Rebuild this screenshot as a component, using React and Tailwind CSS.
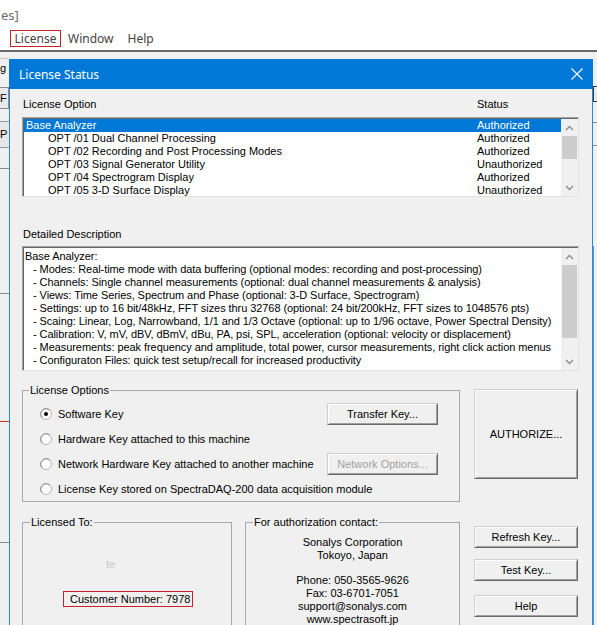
import React from 'react';

const listItems = [
  { name: 'Base Analyzer', status: 'Authorized', indent: false, selected: true },
  { name: 'OPT /01 Dual Channel Processing', status: 'Authorized', indent: true },
  { name: 'OPT /02 Recording and Post Processing Modes', status: 'Authorized', indent: true },
  { name: 'OPT /03 Signal Generator Utility', status: 'Unauthorized', indent: true },
  { name: 'OPT /04 Spectrogram Display', status: 'Authorized', indent: true },
  { name: 'OPT /05 3-D Surface Display', status: 'Unauthorized', indent: true },
];

const descLines = [
  '- Modes: Real-time mode with data buffering (optional modes: recording and post-processing)',
  '- Channels: Single channel measurements (optional: dual channel measurements & analysis)',
  '- Views: Time Series, Spectrum and Phase (optional: 3-D Surface, Spectrogram)',
  '- Settings: up to 16 bit/48kHz, FFT sizes thru 32768 (optional: 24 bit/200kHz, FFT sizes to 1048576 pts)',
  '- Scaing: Linear, Log, Narrowband, 1/1 and 1/3 Octave (optional: up to 1/96 octave, Power Spectral Density)',
  '- Calibration: V, mV, dBV, dBmV, dBu, PA, psi, SPL, acceleration (optional: velocity or displacement)',
  '- Measurements: peak frequency and amplitude, total power, cursor measurements, right click action menus',
  '- Configuraton Files: quick test setup/recall for increased productivity',
];

const radios = [
  { label: 'Software Key', checked: true, button: 'Transfer Key...' },
  { label: 'Hardware Key attached to this machine' },
  { label: 'Network Hardware Key attached to another machine', button: 'Network Options...', disabled: true },
  { label: 'License Key stored on SpectraDAQ-200 data acquisition module' },
];

const Chevron = ({ down }) => (
  <svg width="9" height="6" viewBox="0 0 9 6">
    <polyline
      points={down ? '1,1 4.5,4.5 8,1' : '1,5 4.5,1.5 8,5'}
      fill="none"
      stroke="#8a8a8a"
      strokeWidth="1.3"
    />
  </svg>
);

// classic raised 3D button
const Button = ({ children, className = '', disabled }) => (
  <div
    className={`flex items-center justify-center bg-[#f0f0f0] border border-t-[#cfcfcf] border-l-[#cfcfcf] border-r-[#696969] border-b-[#696969] shadow-[inset_1px_1px_0_#ffffff,inset_-1px_-1px_0_#a0a0a0] ${disabled ? 'text-[#a0a0a0]' : 'text-black'} ${className}`}
  >
    {children}
  </div>
);

const Radio = ({ checked }) => (
  <svg width="12" height="12" viewBox="0 0 12 12" className="shrink-0">
    <circle cx="6" cy="6" r="5.5" fill="#ffffff" stroke="#b4b4b4" strokeWidth="1" />
    <path d="M2.2 9.8 A5.4 5.4 0 0 1 9.8 2.2" fill="none" stroke="#8c8c8c" strokeWidth="1" />
    {checked && <circle cx="6" cy="6" r="2" fill="#000000" />}
  </svg>
);

const ListScrollbar = () => (
  <div className="w-[17px] flex flex-col bg-[#f0f0f0]">
    <div className="h-[17px] flex items-center justify-center"><Chevron /></div>
    <div className="h-[23px] mx-[1px] bg-[#cdcdcd]" />
    <div className="flex-1" />
    <div className="h-[17px] flex items-center justify-center"><Chevron down /></div>
  </div>
);

const DescScrollbar = () => (
  <div className="w-[17px] flex flex-col bg-[#f0f0f0]">
    <div className="h-[17px] flex items-center justify-center"><Chevron /></div>
    <div className="h-[73px] mx-[1px] bg-[#cdcdcd]" />
    <div className="flex-1" />
    <div className="h-[17px] flex items-center justify-center"><Chevron down /></div>
  </div>
);

const App = () => {
  return (
    <div className="w-[597px] h-[625px] overflow-hidden bg-white flex flex-col font-['Liberation_Sans',Arial,sans-serif]">
      {/* app header behind the dialog */}
      <div className="h-[50px] shrink-0 font-['Noto_Sans',sans-serif] text-[12px] text-[#444444]">
        <div className="h-[28px] leading-[30px] pl-[1px] text-[#6b6b6b] text-[13px]">es]</div>
        <div className="flex items-center h-[20px]">
          <div className="ml-[10px] w-[51px] h-[17px] mt-[1px] border border-[#c8202c] flex items-center justify-center">License</div>
          <div className="ml-[7px] mt-[2px]">Window</div>
          <div className="ml-[14px] mt-[2px]">Help</div>
        </div>
      </div>
      <div className="h-[2px] shrink-0 bg-[#696969]" />

      <div className="flex-1 flex bg-[#f0f0f0] min-h-0">
        {/* left strip of the main window */}
        <div className="w-[9px] shrink-0 flex flex-col text-[11px]">
          <div className="h-[7px] border-b border-[#c8c8c8]" />
          <div className="h-[18px] leading-[18px] text-black overflow-hidden">g</div>
          <div className="mt-[10px] h-[22px] border border-l-0 border-[#8a8a8a] bg-[#e8e8e8] text-[11px] leading-[20px] overflow-hidden">F</div>
          <div className="mt-[12px] h-[27px] border-y border-[#9a9a9a] bg-[#e6e6e6] leading-[25px] overflow-hidden">P</div>
          <div className="mt-[20px] h-[1px] bg-[#8a8a8a]" />
          <div className="mt-[124px] h-[1px] bg-[#8a8a8a]" />
          <div className="mt-[127px] h-[1px] bg-[#d03030]" />
          <div className="mt-[120px] h-[1px] bg-[#8a8a8a]" />
        </div>

        {/* dialog */}
        <div className="w-[584px] shrink-0 mt-[7px] flex flex-col border-x border-[#2b87d8] bg-[#f0f0f0] text-[11px] leading-[13px] text-black">
          <div className="h-[30px] shrink-0 bg-[#0078d7] -mx-[1px] flex items-center justify-between pl-[10px] pr-[10px]">
            <span className="font-['Noto_Sans',sans-serif] text-[12px] text-white mt-[1px]">License Status</span>
            <svg width="12" height="12" viewBox="0 0 12 12">
              <path d="M0.5 0.5 L11.5 11.5 M11.5 0.5 L0.5 11.5" stroke="#ffffff" strokeWidth="1.1" />
            </svg>
          </div>

          <div className="pl-[12px] pr-[13px] flex flex-col">
            <div className="mt-[9px] h-[13px] flex">
              <div className="pl-[1px] w-[455px]">License Option</div>
              <div>Status</div>
            </div>

            {/* license list */}
            <div className="mt-[6px] h-[80px] flex border border-t-[#a0a0a0] border-l-[#a0a0a0] border-r-[#e3e3e3] border-b-[#e3e3e3] shadow-[inset_1px_1px_0_#696969] bg-white">
              <div className="flex-1 pt-[1px] pl-[1px] flex flex-col">
                {listItems.map((item) => (
                  <div
                    key={item.name}
                    className={`h-[13px] flex ${item.selected ? 'bg-[#0078d7] text-white' : ''}`}
                  >
                    <div className={`w-[453px] ${item.indent ? 'pl-[24px]' : 'pl-[2px]'}`}>{item.name}</div>
                    <div>{item.status}</div>
                  </div>
                ))}
              </div>
              <div className="pt-[1px] flex">
                <ListScrollbar />
              </div>
            </div>

            <div className="mt-[31px] h-[13px] pl-[1px]">Detailed Description</div>

            {/* description */}
            <div className="mt-[5px] h-[125px] flex border border-t-[#a0a0a0] border-l-[#a0a0a0] border-r-[#e3e3e3] border-b-[#e3e3e3] shadow-[inset_1px_1px_0_#696969] bg-white">
              <div className="flex-1 pt-[3px] pl-[2px] whitespace-nowrap overflow-hidden tracking-[-0.07px]">
                <div className="h-[13px]">Base Analyzer:</div>
                {descLines.map((line) => (
                  <div key={line} className="h-[13px] pl-[8px]">{line}</div>
                ))}
              </div>
              <div className="pt-[1px] flex">
                <DescScrollbar />
              </div>
            </div>

            {/* license options row */}
            <div className="mt-[13px] flex">
              <fieldset className="w-[438px] h-[118px] border border-[#a8a8a8] rounded-none">
                <legend className="ml-[6px] px-[1px] h-[13px] leading-[13px]">License Options</legend>
                <div className="pl-[17px] pr-[21px] pt-[6px] flex flex-col gap-[3px]">
                  {radios.map((r) => (
                    <div key={r.label} className="h-[22px] flex items-center">
                      <Radio checked={r.checked} />
                      <span className="ml-[6px] flex-1">{r.label}</span>
                      {r.button && (
                        <Button className="w-[111px] h-[22px]" disabled={r.disabled}>{r.button}</Button>
                      )}
                    </div>
                  ))}
                </div>
              </fieldset>
              <Button className="ml-[14px] mt-[5px] w-[104px] h-[90px]">AUTHORIZE...</Button>
            </div>

            {/* bottom row */}
            <div className="mt-[14px] flex">
              <fieldset className="w-[210px] h-[140px] border border-[#a8a8a8]">
                <legend className="ml-[7px] px-[1px] h-[13px] leading-[13px]">Licensed To:</legend>
                <div className="flex flex-col items-start">
                  <div className="mt-[29px] ml-[83px] h-[13px] text-[#c8c8c8]">te</div>
                  <div className="mt-[20px] ml-[40px] w-[130px] h-[16px] border border-[#c8202c] flex items-center pl-[6px]">
                    Customer Number: 7978
                  </div>
                </div>
              </fieldset>

              <fieldset className="ml-[13px] w-[215px] h-[140px] border border-[#a8a8a8]">
                <legend className="ml-[7px] px-[1px] h-[13px] leading-[13px]">For authorization contact:</legend>
                <div className="pt-[7px] text-center leading-[12.8px]">
                  <div>Sonalys Corporation</div>
                  <div>Tokoyo, Japan</div>
                  <div className="h-[12.8px]" />
                  <div>Phone: 050-3565-9626</div>
                  <div>Fax: 03-6701-7051</div>
                  <div>support@sonalys.com</div>
                  <div>www.spectrasoft.jp</div>
                </div>
              </fieldset>

              <div className="ml-[14px] w-[104px] flex flex-col">
                <Button className="mt-[10px] h-[22px]">Refresh Key...</Button>
                <Button className="mt-[11px] h-[22px]">Test Key...</Button>
                <Button className="mt-[14px] h-[22px]">Help</Button>
              </div>
            </div>
          </div>
        </div>

        {/* right strip of the main window */}
        <div className="flex-1 flex flex-col">
          <div className="mt-[34px] h-[16px] border border-r-0 border-[#3a3a3a] bg-[#e8e8e8]" />
          <div className="mt-[20px] h-[1px] bg-[#8a8a8a]" />
          <div className="mt-[22px] h-[1px] bg-[#8a8a8a]" />
          <div className="flex-1 mt-[100px] border-l border-[#5a9ad8]" />
        </div>
      </div>
    </div>
  );
};

export default App;
